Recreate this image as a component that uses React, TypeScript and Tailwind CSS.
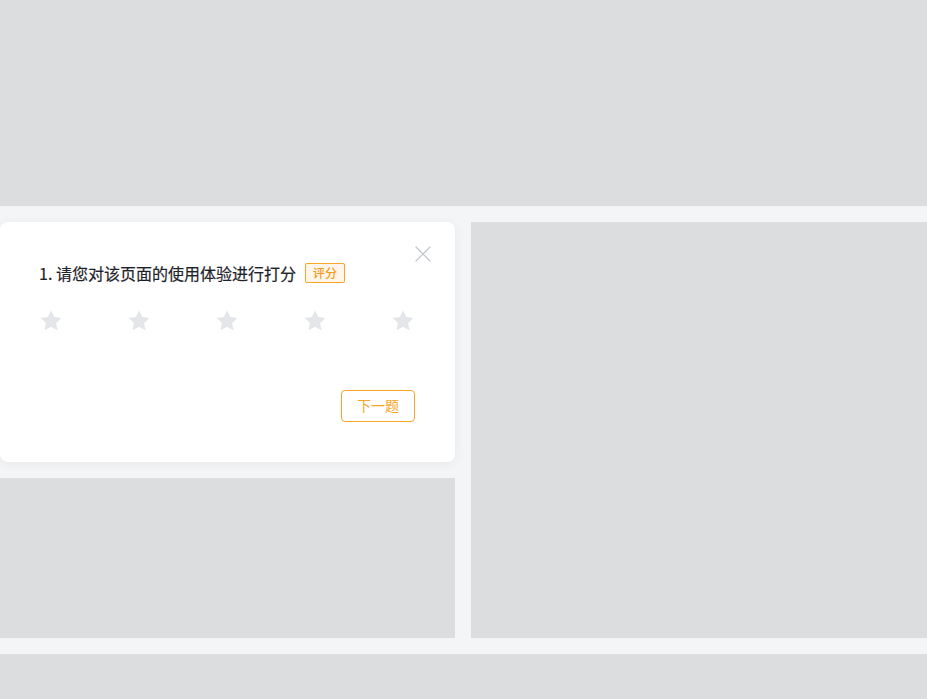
import { X } from "lucide-react";

const Star = () => (
  <svg width="24" height="24" viewBox="0 0 24 24" className="text-[#e4e5e9]">
    <path
      fill="currentColor"
      d="M12 1.5l3.2 6.6 7.3.9-5.4 5 1.4 7.3L12 17.8l-6.5 3.5 1.4-7.3-5.4-5 7.3-.9z"
    />
  </svg>
);

const SurveyCard = () => {
  return (
    <div className="relative h-[240px] bg-white rounded-lg shadow-[0_2px_12px_rgba(0,0,0,0.06)] pt-[41px] pl-[39px] pr-[40px] flex flex-col">
      <button className="absolute right-[18px] top-[18px] text-[#c0c4cc]">
        <X size={28} strokeWidth={1} />
      </button>
      <div className="flex items-center h-5">
        <span className="text-[16px] font-normal text-[#1f2329] [-webkit-text-stroke:0.2px_#1f2329]">
          1. 请您对该页面的使用体验进行打分
        </span>
        <span className="ml-[9px] w-10 h-5 flex items-center justify-center border border-[#f8a529] bg-[#fff6e9] text-[#f59a1e] text-[12px] font-medium rounded-[2px]">
          评分
        </span>
      </div>
      <div className="flex justify-between mt-[26px]">
        <Star />
        <Star />
        <Star />
        <Star />
        <Star />
      </div>
      <div className="flex justify-end mt-[57px]">
        <button className="w-[74px] h-8 pb-px border border-[#f8a529] rounded text-[#f8a529] text-[14px] bg-white">
          下一题
        </button>
      </div>
    </div>
  );
};

export default function App() {
  return (
    <div
      className="w-[927px] h-[699px] overflow-hidden bg-[#f4f5f7] flex flex-col gap-4"
      style={{ fontFamily: '"Noto Sans CJK SC", "Noto Sans", sans-serif' }}
    >
      <div className="h-[206px] shrink-0 bg-[#dcdddf]" />
      <div className="flex gap-4 shrink-0">
        <div className="w-[455px] flex flex-col gap-4">
          <SurveyCard />
          <div className="h-[160px] bg-[#dcdddf]" />
        </div>
        <div className="flex-1 h-[416px] bg-[#dcdddf]" />
      </div>
      <div className="flex-1 bg-[#dcdddf]" />
    </div>
  );
}
